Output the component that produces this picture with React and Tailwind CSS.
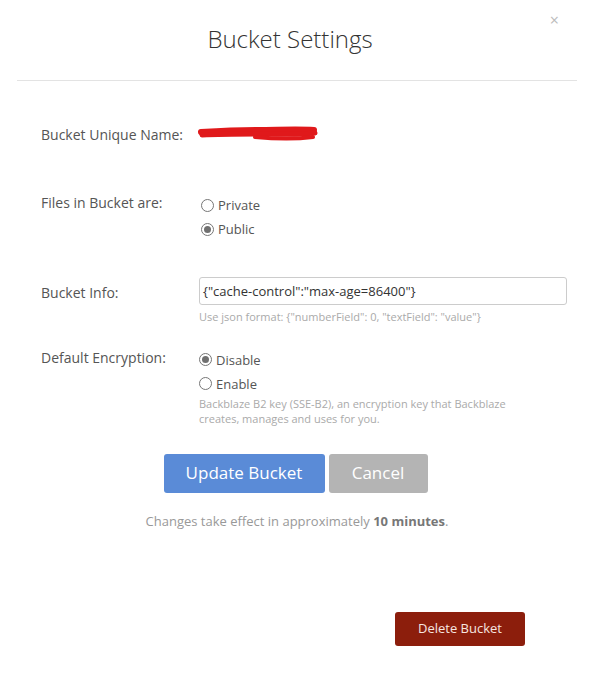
import React from 'react';

function Radio({ checked, label }) {
  return (
    <label className="flex items-center gap-[4px] text-[13px] text-[#555] leading-[24px]">
      <span className="flex h-[13px] w-[13px] items-center justify-center rounded-full border border-[#767676] bg-white">
        {checked && <span className="h-[7px] w-[7px] rounded-full bg-[#707070]" />}
      </span>
      {label}
    </label>
  );
}

export default function App() {
  return (
    <div className="min-h-[679px] w-[594px] bg-white font-['Open_Sans',sans-serif] text-[#555]">
      <div className="relative">
        <span className="absolute right-[35px] top-[12px] text-[16px] leading-none text-[#bbb]">×</span>
        <h1 className="pt-[22px] pb-[25px] pr-[14px] text-center text-[24px] font-light leading-[33px] text-[#333]">Bucket Settings</h1>
        <div className="mx-[17px] h-px bg-[#e3e3e3]" />
      </div>

      <div className="px-[41px] pt-[42px]">
        {/* unique name */}
        <div className="flex items-center">
          <div className="w-[158px] text-[14px]">Bucket Unique Name:</div>
          <svg width="122" height="22" viewBox="0 0 122 22" className="-ml-[2px]">
            <path d="M4 9 C20 8, 40 7, 60 7 S 100 6, 117 7" stroke="#e0191b" strokeWidth="6" fill="none" strokeLinecap="round" />
            <path d="M5 12 C25 11, 45 11, 65 11 S 100 12, 118 10" stroke="#e0191b" strokeWidth="5" fill="none" strokeLinecap="round" />
            <path d="M58 14 C80 16, 100 16, 116 14" stroke="#e0191b" strokeWidth="4" fill="none" strokeLinecap="round" />
          </svg>
        </div>

        {/* files */}
        <div className="mt-[45px] flex">
          <div className="w-[160px] pt-[2px] text-[14px]">Files in Bucket are:</div>
          <div className="flex flex-col pt-[3px]">
            <Radio label="Private" />
            <Radio checked label="Public" />
          </div>
        </div>

        {/* info */}
        <div className="mt-[36px] flex">
          <div className="w-[158px] pt-[5px] text-[14px]">Bucket Info:</div>
          <div className="flex-1">
            <div className="mr-[-14px] h-[28px] rounded-[3px] border border-[#ccc] px-[3px] text-[13px] leading-[26px] text-[#333]">
              {'{"cache-control":"max-age=86400"}'}
            </div>
            <div className="mt-[4px] text-[11px] text-[#aaa]">
              Use json format: {'{"numberField": 0, "textField": "value"}'}
            </div>
          </div>
        </div>

        {/* encryption */}
        <div className="mt-[22px] flex">
          <div className="-mt-[1px] w-[158px] text-[14px]">Default Encryption:</div>
          <div className="flex flex-col">
            <Radio checked label="Disable" />
            <Radio label="Enable" />
            <div className="w-[330px] text-[11px] leading-[15px] text-[#aaa]">
              Backblaze B2 key (SSE-B2), an encryption key that Backblaze creates, manages and uses for you.
            </div>
          </div>
        </div>
      </div>

      <div className="mt-[28px] flex justify-center gap-[4px] pr-[3px]">
        <button className="h-[39px] w-[161px] rounded-[3px] bg-[#5a8bd7] text-[17px] text-white">Update Bucket</button>
        <button className="h-[39px] w-[99px] rounded-[3px] bg-[#b4b4b4] text-[17px] text-white">Cancel</button>
      </div>
      <p className="mt-[19px] text-center text-[13px] text-[#999]">
        Changes take effect in approximately <b className="font-bold text-[#777]">10 minutes</b>.
      </p>

      <div className="mt-[81px] flex justify-end pr-[69px]">
        <button className="h-[34px] w-[130px] rounded-[3px] bg-[#8c1e0c] text-[13px] text-[#f6e6e0]">Delete Bucket</button>
      </div>
    </div>
  );
}
